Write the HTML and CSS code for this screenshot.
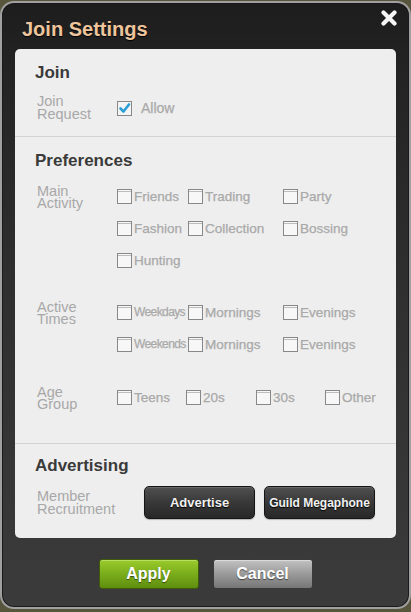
FILE: index.html
```html
<!DOCTYPE html>
<html>
<head>
<meta charset="utf-8">
<link rel="stylesheet" href="styles.css">
</head>
<body>
<div class="window">
  <div class="header">
    <div class="title">Join Settings</div>
    <div class="close">
      <svg width="16" height="16" viewBox="0 0 16 16"><path d="M2.5 2.5 L13.5 13.5 M13.5 2.5 L2.5 13.5" stroke="#f6f6f6" stroke-width="4.2" stroke-linecap="round"/></svg>
    </div>
  </div>
  <div class="panel">
    <div class="section s1">
      <h2>Join</h2>
      <div class="row join-row">
        <div class="label"><span>Join</span><span>Request</span></div>
        <div class="opt"><span class="box checked"><svg width="13" height="13" viewBox="0 0 13 13"><path d="M2.5 6.5 L5.5 9.5 L11 2.5" fill="none" stroke="#2a9fd6" stroke-width="2.6" stroke-linecap="round" stroke-linejoin="round"/></svg></span><span class="allow">Allow</span></div>
      </div>
    </div>
    <div class="section s2">
      <h2>Preferences</h2>
      <div class="group g1">
        <div class="label"><span>Main</span><span>Activity</span></div>
        <div class="opts">
          <div class="orow three">
            <div class="opt"><span class="box"></span><span>Friends</span></div>
            <div class="opt"><span class="box"></span><span>Trading</span></div>
            <div class="opt"><span class="box"></span><span>Party</span></div>
          </div>
          <div class="orow three">
            <div class="opt"><span class="box"></span><span>Fashion</span></div>
            <div class="opt"><span class="box"></span><span>Collection</span></div>
            <div class="opt"><span class="box"></span><span>Bossing</span></div>
          </div>
          <div class="orow three">
            <div class="opt"><span class="box"></span><span>Hunting</span></div>
          </div>
        </div>
      </div>
      <div class="group g2">
        <div class="label"><span>Active</span><span>Times</span></div>
        <div class="opts">
          <div class="orow three">
            <div class="opt"><span class="box"></span><span class="narrow">Weekdays</span></div>
            <div class="opt"><span class="box"></span><span>Mornings</span></div>
            <div class="opt"><span class="box"></span><span>Evenings</span></div>
          </div>
          <div class="orow three">
            <div class="opt"><span class="box"></span><span class="narrow">Weekends</span></div>
            <div class="opt"><span class="box"></span><span>Mornings</span></div>
            <div class="opt"><span class="box"></span><span>Evenings</span></div>
          </div>
        </div>
      </div>
      <div class="group g3">
        <div class="label"><span>Age</span><span>Group</span></div>
        <div class="opts">
          <div class="orow four">
            <div class="opt"><span class="box"></span><span>Teens</span></div>
            <div class="opt"><span class="box"></span><span>20s</span></div>
            <div class="opt"><span class="box"></span><span>30s</span></div>
            <div class="opt"><span class="box"></span><span>Other</span></div>
          </div>
        </div>
      </div>
    </div>
    <div class="section s3">
      <h2>Advertising</h2>
      <div class="row ad-row">
        <div class="label"><span>Member</span><span>Recruitment</span></div>
        <div class="ad-buttons">
          <button class="dark-btn">Advertise</button>
          <button class="dark-btn small">Guild Megaphone</button>
        </div>
      </div>
    </div>
  </div>
  <div class="footer">
    <button class="btn apply">Apply</button>
    <button class="btn cancel">Cancel</button>
  </div>
</div>
</body>
</html>
```

FILE: styles.css
```css
* { box-sizing: border-box; }
html, body { margin: 0; padding: 0; }
body {
  width: 411px;
  height: 612px;
  background: #57553c;
  font-family: "Liberation Sans", Arial, sans-serif;
  overflow: hidden;
}
.window {
  margin-top: 1px;
  height: 608px;
  border: 2px solid #a0a0a0;
  border-radius: 14px;
  background: linear-gradient(#1d1d1d 0%, #232323 10%, #303030 50%, #3b3b3b 100%);
  box-shadow: inset 0 0 0 1px #1a1a1a;
  display: flex;
  flex-direction: column;
}
.header {
  height: 46px;
  display: flex;
  justify-content: space-between;
  padding-left: 20px;
  padding-right: 12px;
}
.title {
  padding-top: 14px;
  font-size: 20px;
  line-height: 24px;
  font-weight: bold;
  color: #eec59c;
  text-shadow: 0 1px 1px #000;
}
.close {
  margin-top: 7px;
  width: 16px;
  height: 16px;
}
.close svg { display: block; }
.panel {
  margin: 0 13px;
  height: 489px;
  background: #eeeeee;
  border-radius: 5px;
}
.section {
  padding-left: 20px;
  padding-right: 20px;
  border-bottom: 1px solid #d3d3d3;
}
.section.s3 { border-bottom: none; }
h2 {
  margin: 0;
  font-size: 17px;
  line-height: 20px;
  font-weight: bold;
  color: #3a3a3a;
}
.s1 { padding-top: 14px; padding-bottom: 15px; }
.s2 { padding-top: 14px; padding-bottom: 33px; }
.s3 { padding-top: 12px; padding-bottom: 20px; }
.label {
  width: 82px;
  flex: none;
  padding-left: 2px;
  font-size: 14.5px;
  line-height: 13px;
  color: #a8a8a8;
  display: flex;
  flex-direction: column;
}
.label span { display: block; height: 12px; line-height: 12px; }
.row { display: flex; align-items: center; }
.join-row { margin-top: 12px; height: 26px; }
.join-row .label span { height: 13px; line-height: 13px; }
.group { display: flex; align-items: flex-start; }
.group .label { padding-top: 1px; }
.g1 { margin-top: 13px; }
.g2 { margin-top: 28px; }
.g3 { margin-top: 29px; }
.opts { display: flex; flex-direction: column; gap: 8px; }
.orow { display: flex; height: 24px; align-items: center; }
.orow.three .opt:nth-child(1) { width: 71px; }
.orow.three .opt:nth-child(2) { width: 95px; }
.orow.four .opt:nth-child(1) { width: 69px; }
.orow.four .opt:nth-child(2) { width: 70px; }
.orow.four .opt:nth-child(3) { width: 69px; }
.opt {
  display: flex;
  align-items: center;
  gap: 2px;
  font-size: 13.5px;
  color: #a9a9a9;
  white-space: nowrap;
  -webkit-text-stroke: 0.25px #a9a9a9;
}
.opt .narrow {
  font-size: 12px;
  letter-spacing: -0.6px;
}
.box {
  width: 15px;
  height: 15px;
  flex: none;
  border: 1.5px solid #888;
  background: #f7f7f7;
  box-shadow: inset 0 1px 0 #f7f7f7, inset 0 2px 0 #bdbdbd;
  display: flex;
  align-items: center;
  justify-content: center;
}
.box.checked { box-shadow: none; background: #f4f4f4; }
.box svg { display: block; }
.allow { margin-left: 7px; font-size: 14px; }
.ad-row { margin-top: 10px; height: 33px; }
.ad-row .label { width: 109px; padding-top: 1px; }
.ad-row .label span { height: 13px; line-height: 13px; }
.ad-buttons { display: flex; gap: 9px; }
.dark-btn {
  width: 111px;
  height: 33px;
  padding: 0;
  border: 1px solid #151515;
  border-radius: 5px;
  background: linear-gradient(#505050, #383838 50%, #282828);
  box-shadow: inset 0 1px 0 #666, 0 1px 1px rgba(0,0,0,0.25);
  color: #f2f2f2;
  font-family: "Liberation Sans", Arial, sans-serif;
  font-size: 13px;
  font-weight: bold;
  text-shadow: 0 1px 1px #000;
}
.dark-btn.small { font-size: 12px; }
.footer {
  margin-top: 21px;
  display: flex;
  justify-content: center;
  gap: 14px;
}
.btn {
  width: 100px;
  height: 30px;
  padding: 0;
  border-radius: 3px;
  font-family: "Liberation Sans", Arial, sans-serif;
  font-size: 16px;
  font-weight: bold;
  color: #fff;
  text-shadow: 0 1px 1px rgba(0,0,0,0.55);
}
.apply {
  border: 1px solid #3e5a0a;
  background: linear-gradient(#9acb2c, #7aad1c 50%, #5f8e0f);
  box-shadow: inset 0 1px 0 #b8e060;
}
.cancel {
  border: 1px solid #3a3a3a;
  background: linear-gradient(#c2c2c2, #9a9a9a 50%, #767676);
  box-shadow: inset 0 1px 0 #dadada;
}
```
